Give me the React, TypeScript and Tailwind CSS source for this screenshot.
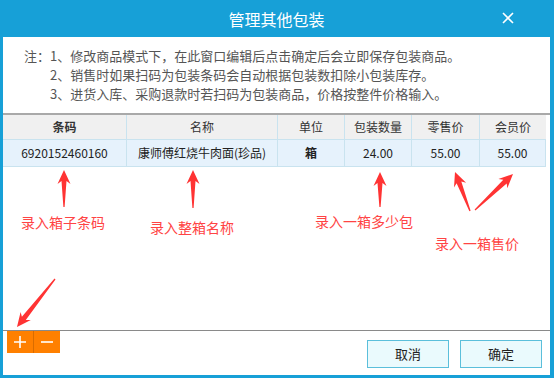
import React from "react";

const font = { fontFamily: '"Microsoft YaHei", "Noto Sans CJK SC", "Liberation Sans", sans-serif' };

const columns = [
  { title: "条码", width: "w-[123px]", value: "6920152460160", bold: true },
  { title: "名称", width: "w-[151px]", value: "康师傅红烧牛肉面(珍品)" },
  { title: "单位", width: "w-[67px]", value: "箱" },
  { title: "包装数量", width: "w-[67px]", value: "24.00" },
  { title: "零售价", width: "w-[68px]", value: "55.00" },
  { title: "会员价", width: "w-[67px]", value: "55.00" },
];

const notes = [
  "注：1、修改商品模式下，在此窗口编辑后点击确定后会立即保存包装商品。",
  "2、销售时如果扫码为包装条码会自动根据包装数扣除小包装库存。",
  "3、进货入库、采购退款时若扫码为包装商品，价格按整件价格输入。",
];

// tail -> tip
const arrows: [number, number, number, number][] = [
  [64, 207, 64, 170],
  [193, 208, 193, 170],
  [380, 207, 380, 172],
  [470, 211, 455, 172],
  [475, 210, 513, 174],
  [55, 279, 17, 327],
];

function arrowPoints(x1: number, y1: number, x2: number, y2: number) {
  const dx = x2 - x1;
  const dy = y2 - y1;
  const len = Math.hypot(dx, dy);
  const ux = dx / len;
  const uy = dy / len;
  const nx = -uy;
  const ny = ux;
  const head = 14;
  const p = (d: number, w: number) =>
    `${(x1 + ux * d + nx * w).toFixed(1)},${(y1 + uy * d + ny * w).toFixed(1)}`;
  const neck = len - head;
  return [
    p(0, 0.6),
    p(neck + 3, 2.5),
    p(neck, 6.5),
    p(len, 0),
    p(neck, -6.5),
    p(neck + 3, -2.5),
    p(0, -0.6),
  ].join(" ");
}

const labels = [
  { text: "录入箱子条码", cls: "left-[21px] top-[213px]" },
  { text: "录入整箱名称", cls: "left-[150px] top-[218px]" },
  { text: "录入一箱多少包", cls: "left-[315px] top-[212px]" },
  { text: "录入一箱售价", cls: "left-[435px] top-[234px]" },
];

export default function App() {
  return (
    <div
      className="relative w-[554px] h-[378px] bg-[#17a0d7] flex flex-col pl-[3px] pr-[4px] pb-[3px] overflow-hidden"
      style={font}
    >
      <div className="h-[37px] flex items-center justify-center relative text-white text-[16px]">
        管理其他包装
        <svg className="absolute left-[499px] top-[12px]" width={12} height={12} viewBox="0 0 12 12">
          <path d="M1 1L11 11M11 1L1 11" stroke="#fff" strokeWidth={1.6} />
        </svg>
      </div>

      <div className="flex-1 bg-white flex flex-col">
        <div className="pt-[9px] pl-[21px] text-[13px] leading-[19px] text-[#555]">
          <div>{notes[0]}</div>
          <div className="pl-[26px]">{notes[1]}</div>
          <div className="pl-[26px]">{notes[2]}</div>
        </div>

        <div className="mt-[10px] border-t-2 border-[#a9a9a9]">
          <div className="flex w-[543px] text-[12px] text-[#333]">
            {columns.map((c, i) => (
              <div
                key={c.title}
                className={`${c.width} h-[25px] flex items-center justify-center bg-[#f0f0f0] border-b border-[#c9e3ef] ${
                  i > 0 ? "border-l" : ""
                } ${c.bold ? "font-bold" : ""}`}
              >
                {c.title}
              </div>
            ))}
          </div>
          <div className="flex w-[543px] text-[12px] text-[#222]">
            {columns.map((c, i) => (
              <div
                key={c.title}
                className={`${c.width} h-[27px] flex items-center justify-center bg-[#e6f2fc] border-b border-[#c9e3ef] ${
                  i > 0 ? "border-l" : ""
                } ${c.title === "单位" ? "font-bold" : ""} ${i === columns.length - 1 ? "border-r" : ""}`}
              >
                {c.value}
              </div>
            ))}
          </div>
        </div>

        <div className="flex-1" />

        <div className="h-[45px] border-t border-[#8a8a8a] flex items-start justify-between pl-[4px] pr-[8px]">
          <div className="flex">
            <button className="w-[27px] h-[22px] bg-[#ff8000] flex items-center justify-center border-r border-[#d96c00]">
              <svg width={12} height={12} viewBox="0 0 12 12">
                <path d="M6 0V12M0 6H12" stroke="#fff" strokeWidth={1.6} />
              </svg>
            </button>
            <button className="w-[26px] h-[22px] bg-[#ff8000] flex items-center justify-center">
              <svg width={12} height={12} viewBox="0 0 12 12">
                <path d="M0 6H12" stroke="#fff" strokeWidth={1.6} />
              </svg>
            </button>
          </div>
          <div className="flex gap-[11px] mt-[9px]">
            <button className="w-[82px] h-[28px] bg-[#eafafd] border border-[#5bbfdb] text-[13px] text-[#222]">
              取消
            </button>
            <button className="w-[82px] h-[28px] bg-[#eafafd] border border-[#5bbfdb] text-[13px] text-[#222]">
              确定
            </button>
          </div>
        </div>
      </div>

      <svg className="absolute inset-0 pointer-events-none" width={554} height={378}>
        {arrows.map((a, i) => (
          <polygon key={i} points={arrowPoints(...a)} fill="#ff3333" />
        ))}
      </svg>

      {labels.map((l) => (
        <span key={l.text} className={`absolute ${l.cls} text-[14px] leading-[18px] text-[#ff4444]`}>
          {l.text}
        </span>
      ))}
    </div>
  );
}
